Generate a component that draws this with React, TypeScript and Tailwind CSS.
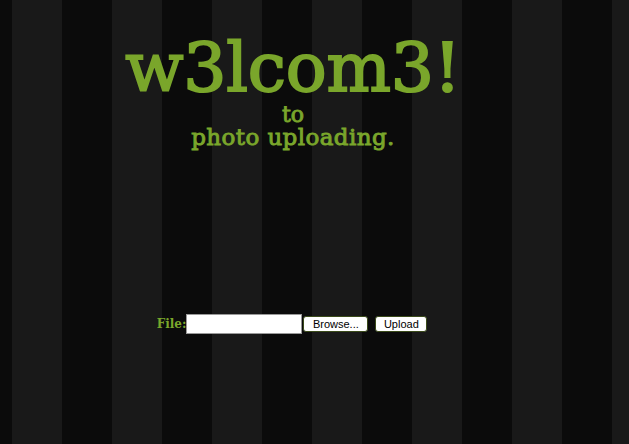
import React from "react";

export default function App() {
  return (
    <div className="w-[629px] h-[444px] overflow-hidden bg-[linear-gradient(90deg,#191919_50%,#0b0b0b_50%)] bg-[length:100px_100%] bg-[position:12px_0] [font-family:'DejaVu_Serif',serif] text-[#7aa62b]">
      <div className="w-[586px] flex flex-col items-center pt-[30px]">
        <h1 className="text-[68px] leading-[76px] tracking-[-0.2px] [-webkit-text-stroke:2px_#7aa62b]">w3lcom3!</h1>
        <p className="text-[22px] leading-[18px] [-webkit-text-stroke:0.9px_#7aa62b]">to</p>
        <p className="text-[23px] leading-[26px] tracking-[0.4px] [-webkit-text-stroke:0.9px_#7aa62b]">photo uploading.</p>
      </div>
      <form className="w-[584px] flex items-center justify-center mt-[164px]" onSubmit={(e) => e.preventDefault()}>
        <label className="text-[12px] font-bold leading-[14px]">File:</label>
        <input type="text" className="w-[116px] h-[20px] bg-white border border-[#999] outline-none" />
        <button type="button" className="ml-[1px] w-[65px] h-[16px] bg-white border border-[#3a4a1a] rounded-[3px] text-black text-[11px] leading-[13px] [font-family:'Liberation_Sans',sans-serif]">Browse...</button>
        <button type="submit" className="ml-[7px] w-[52px] h-[16px] bg-white border border-[#3a4a1a] rounded-[3px] text-black text-[11px] leading-[13px] [font-family:'Liberation_Sans',sans-serif]">Upload</button>
      </form>
    </div>
  );
}
